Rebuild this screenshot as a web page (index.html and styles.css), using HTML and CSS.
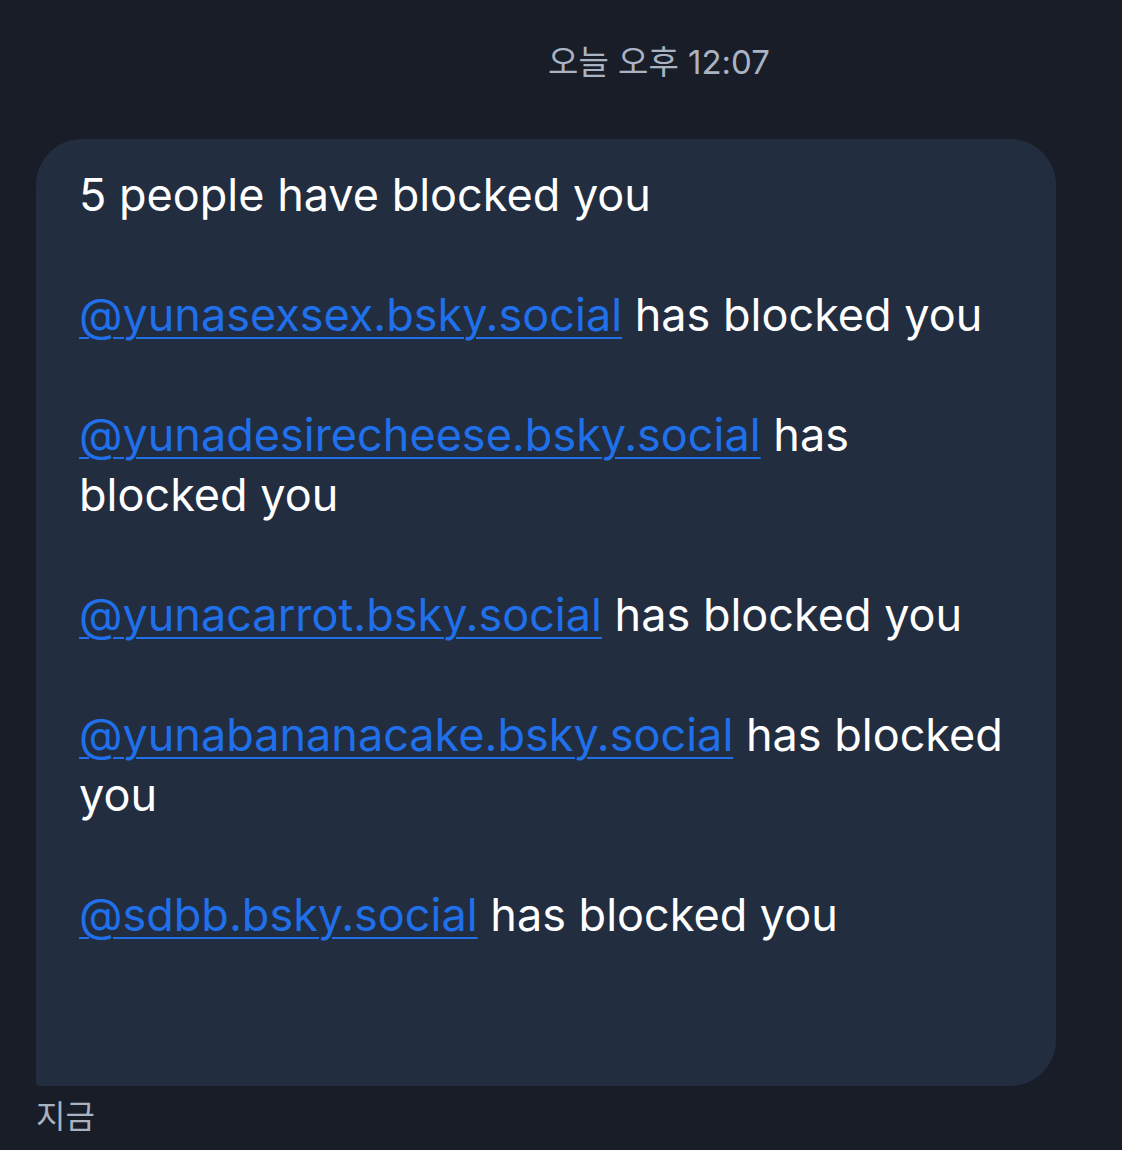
FILE: index.html
```html
<!DOCTYPE html>
<html lang="ko">
<head>
<meta charset="utf-8">
<link rel="stylesheet" href="styles.css">
</head>
<body>
<div class="page">
  <div class="stamp-row"><span class="stamp">오늘 오후 12:07</span></div>
  <div class="bubble">
    <p class="line">5 people have blocked you</p>
    <p class="line"><a class="handle" href="#">@yunasexsex.bsky.social</a> has blocked you</p>
    <p class="line"><a class="handle" href="#">@yunadesirecheese.bsky.social</a> has blocked you</p>
    <p class="line"><a class="handle" href="#">@yunacarrot.bsky.social</a> has blocked you</p>
    <p class="line"><a class="handle" href="#">@yunabananacake.bsky.social</a> has blocked you</p>
    <p class="line"><a class="handle" href="#">@sdbb.bsky.social</a> has blocked you</p>
  </div>
  <div class="meta">지금</div>
</div>
</body>
</html>
```
FILE: styles.css
```css
html, body {
  margin: 0;
  padding: 0;
  background: #181d28;
}
body {
  font-family: Inter, "Noto Sans CJK KR", sans-serif;
  width: 1122px;
  height: 1150px;
  overflow: hidden;
}
.page {
  display: flex;
  flex-direction: column;
  padding: 0 66px 0 36px;
}
.stamp-row {
  display: flex;
  justify-content: center;
  padding: 40px 0 0 226px;
  height: 139px;
  box-sizing: border-box;
}
.stamp {
  color: #aab3c2;
  font-size: 33px;
  line-height: 44px;
}
.bubble {
  background: #222d3f;
  border-radius: 46px 46px 46px 4px;
  padding: 26px 43px 0 43px;
  height: 947px;
  box-sizing: border-box;
  color: #ffffff;
  font-size: 45px;
  line-height: 60px;
}
.line {
  margin: 0 0 60px;
}
.line:last-child {
  margin-bottom: 0;
}
.handle {
  color: #1f70ea;
  text-decoration: underline;
  text-decoration-thickness: 2px;
  text-underline-offset: 6px;
}
.meta {
  color: #a9b2c0;
  font-size: 32px;
  line-height: 44px;
  padding-top: 9px;
}
```
